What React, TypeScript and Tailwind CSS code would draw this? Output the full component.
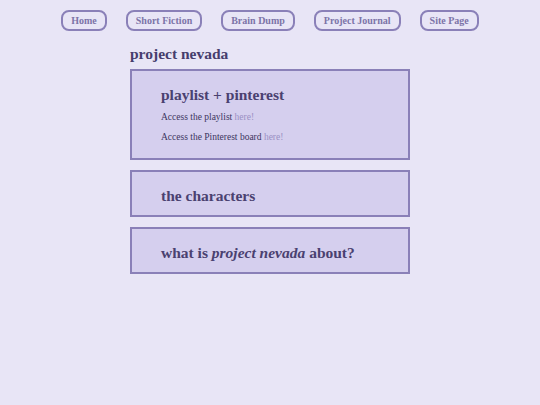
const links = ['Home', 'Short Fiction', 'Brain Dump', 'Project Journal', 'Site Page'];

function Card({ title, children }: { title: React.ReactNode; children?: React.ReactNode }) {
  return (
    <section className="border-2 border-[#8a80b8] bg-[#d5cfee] px-[29px] pt-[14px] pb-[9px]">
      <h2 className="text-[15.5px] font-bold leading-[20px] text-[#4a4170]">{title}</h2>
      {children}
    </section>
  );
}

export default function App() {
  return (
    <div className="min-h-[405px] bg-[#e8e5f6] pt-[10px] font-['Liberation_Serif',serif]">
      <nav className="flex justify-center gap-[19px]">
        {links.map((l) => (
          <a
            key={l}
            href="#"
            className="flex h-[21px] items-center rounded-[8px] border-2 border-[#8a80b8] px-[8px] text-[10px] font-bold text-[#7c74a8]"
          >
            {l}
          </a>
        ))}
      </nav>
      <main className="mx-auto mt-[13px] w-[280px]">
        <h1 className="text-[15.5px] font-bold leading-[20px] text-[#463d6d]">project nevada</h1>
        <div className="mt-[5px] flex flex-col gap-[10px]">
          <Card title="playlist + pinterest">
            <div className="pb-[6px]">
              <p className="mt-[6px] text-[9.5px] leading-[12px] text-[#3c3560]">
                Access the playlist <a href="#" className="text-[#9a90c4]">here!</a>
              </p>
              <p className="mt-[8px] text-[9.5px] leading-[12px] text-[#3c3560]">
                Access the Pinterest board <a href="#" className="text-[#9a90c4]">here!</a>
              </p>
            </div>
          </Card>
          <Card title="the characters" />
          <Card
            title={
              <>
                what is <i>project nevada</i> about?
              </>
            }
          />
        </div>
      </main>
    </div>
  );
}
